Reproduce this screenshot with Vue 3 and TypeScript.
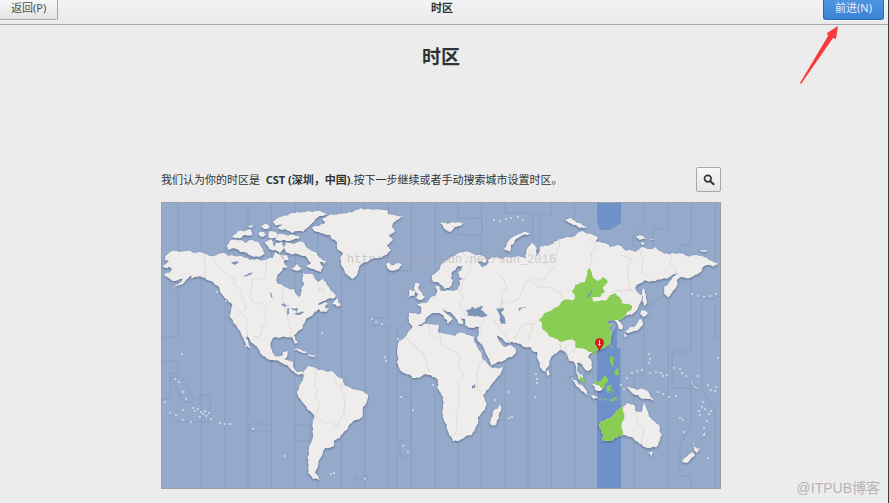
<script setup lang="ts">
type Point = [number, number]

const parse = (s: string): Point[] =>
  s.trim().split(/\s+/).map((p) => p.split(',').map(Number) as Point)

// Deterministic noise, so that coasts shared by two shapes stay identical.
const noise = (x: number, y: number): number => {
  const v = Math.sin(x * 12.9898 + y * 78.233) * 43758.5453
  return (v - Math.floor(v)) * 2 - 1
}

const between = (a: Point, b: Point, depth: number): Point[] => {
  const dx = b[0] - a[0]
  const dy = b[1] - a[1]
  const len = Math.hypot(dx, dy)
  if (depth === 0 || len < 2.5) return [b]
  const mx = (a[0] + b[0]) / 2
  const my = (a[1] + b[1]) / 2
  const n = noise(mx, my) * Math.min(len * 0.16, 1.4)
  const sign = dx > 0 || (dx === 0 && dy > 0) ? 1 : -1
  const m: Point = [mx - (dy / len) * n * sign, my + (dx / len) * n * sign]
  return [...between(a, m, depth - 1), ...between(m, b, depth - 1)]
}

const coast = (s: string): string => {
  const pts = parse(s)
  const out: Point[] = []
  pts.forEach((p, i) => out.push(...between(p, pts[(i + 1) % pts.length], 3)))
  return 'M' + out.map(([x, y]) => `${x.toFixed(1)},${y.toFixed(1)}`).join('L') + 'Z'
}

const border = (s: string): string => {
  const pts = parse(s)
  const out: Point[] = [pts[0]]
  for (let i = 1; i < pts.length; i++) out.push(...between(pts[i - 1], pts[i], 3))
  return 'M' + out.map(([x, y]) => `${x.toFixed(1)},${y.toFixed(1)}`).join('L')
}

const land = [
  // North and Central America
  '165,257 168,254 175,251 180,252 185,251 195,253 205,254 213,256 218,254 223,253 228,256 232,255 243,257 250,260 257,259 265,260 273,258 275,252 278,254 282,257 284,262 288,267 283,268 280,273 277,278 277,283 285,287 294,289 296,294 299,297 301,293 301,288 304,283 302,278 303,273 308,274 312,274 315,279 318,282 320,281 323,279 328,286 330,289 333,292 336,296 333,299 323,301 318,305 326,302 328,304 325,307 327,310 321,312 319,309 314,313 312,316 307,318 305,322 303,325 303,328 300,330 294,335 298,343 295,344 292,337 285,337 279,338 273,338 271,342 272,350 275,356 282,356 283,352 288,351 287,357 285,360 293,362 294,368 297,372 302,371 303,374 298,375 293,371 288,366 282,363 272,360 262,355 257,347 250,340 247,336 246,338 251,348 249,348 245,342 242,336 241,333 238,329 233,323 230,317 231,310 232,304 226,299 222,294 219,287 213,282 205,278 195,277 191,279 193,275 187,279 180,285 172,289 181,282 183,278 173,281 170,279 167,277 164,275 172,269 170,267 165,268 163,265 169,261 165,260',
  // Arctic Canada
  '273,222 280,217 288,215 297,212 308,211 317,211 327,214 317,218 314,222 310,225 303,232 298,231 292,233 285,229 277,228 282,225 275,225',
  '282,234 290,235 299,236 299,239 290,241 283,240 275,240 277,235',
  '228,250 227,245 230,241 240,240 246,243 252,240 258,242 262,248 265,254 259,257 249,255 240,252 236,249',
  '233,236 238,231 247,230 250,229 252,235 244,235 241,238 237,238 232,237',
  '259,226 266,224 270,227 264,229', '258,233 264,232 266,235 261,237', '270,231 277,233 276,238 268,237',
  '265,242 271,239 273,244 275,250 269,249', '276,243 282,242 284,248 280,254 275,250',
  '286,242 293,244 303,242 309,249 317,253 326,261 325,264 320,262 323,267 321,272 313,269 306,266 311,263 305,256 297,254 288,253 284,247',
  '292,268 297,264 302,269 297,271', '247,226 254,225 251,228', '281,255 287,255 289,260 284,261',
  '334,301 337,298 341,305 338,307 332,304', '321,311 329,308 326,312',
  // Greenland and the North Atlantic
  '312,228 319,226 325,223 322,218 333,215 347,213 356,210 367,209 378,209 387,210 388,214 404,216 397,220 392,227 395,232 389,235 393,240 387,245 391,250 388,253 383,256 372,259 363,263 359,268 357,275 353,279 348,276 344,270 341,262 340,258 343,253 338,250 337,242 330,235 320,233 314,231',
  '386,264 389,262 391,265 398,263 402,265 399,269 392,271 388,269',
  '415,283 420,284 418,288 422,293 425,297 419,300 416,298 418,294 414,289', '410,289 415,291 414,296 408,297',
  // Eurasia
  '409,313 420,314 421,307 417,304 425,303 430,298 435,296 437,292 435,287 439,286 441,291 447,290 453,291 458,289 460,285 459,281 468,279 460,278 458,272 463,266 457,267 452,272 451,278 453,281 449,288 445,289 441,285 437,282 433,282 432,275 440,268 445,261 450,258 458,253 464,252 470,252 475,255 480,255 487,260 485,263 478,262 482,267 487,265 488,260 497,257 503,259 515,257 522,257 526,260 527,249 533,243 537,248 535,258 539,253 540,247 550,245 560,239 567,237 576,235 583,231 591,234 598,237 596,242 605,243 610,247 617,245 625,250 635,252 642,247 648,249 655,247 662,252 673,253 685,255 697,255 707,258 712,261 718,263 713,267 708,265 702,268 701,272 694,276 690,278 682,277 677,280 677,286 672,293 668,298 664,293 664,287 672,278 678,273 672,275 667,279 657,280 645,280 639,284 635,288 642,295 641,302 637,310 632,315 625,316 618,320 623,326 622,330 619,329 617,323 614,320 607,322 612,325 609,328 612,335 611,341 605,348 593,352 590,354 588,357 592,363 592,368 587,371 584,368 580,363 577,363 577,370 583,376 584,382 578,378 576,370 574,362 569,361 567,354 560,350 557,353 550,360 548,367 545,372 542,370 538,360 537,352 535,352 530,347 518,344 508,343 504,341 500,337 497,336 500,342 504,347 510,345 516,350 512,357 502,362 491,366 490,362 485,352 479,342 477,338 479,333 479,327 473,328 465,325 465,319 461,318 463,324 458,323 455,317 448,312 443,308 446,313 453,319 451,321 448,324 447,320 439,313 435,313 430,315 427,317 425,322 419,325 413,327 409,323',
  // Arctic islands of Eurasia
  '440,223 448,224 453,222 465,222 461,226 455,227 451,232 446,230',
  '530,233 523,235 516,239 511,245 510,252 504,249 507,243 514,236 522,233', '565,220 571,218 577,223 587,227 580,228 573,225',
  '636,236 643,236 648,239 640,240', '650,238 657,239 652,240', '700,250 707,250 704,252', '641,242 645,243 642,245',
  // Japan, Sakhalin
  '643,288 646,295 647,303 644,306 643,297', '642,310 648,313 643,317 640,314', '642,318 643,323 640,328 634,331 627,333 625,331 634,327 638,322', '624,333 627,335 625,338',
  // Africa and Madagascar
  '415,325 420,326 429,324 438,324 438,332 448,334 455,336 458,333 467,335 475,336 474,340 478,348 482,356 487,363 492,368 503,367 500,375 490,387 483,395 486,402 485,410 478,417 478,424 472,435 463,439 453,441 451,437 447,425 442,412 443,405 443,397 437,388 438,382 436,378 430,375 422,376 412,378 403,373 397,363 397,352 398,343 405,337 410,330',
  '500,404 501,411 496,425 491,425 491,418 493,411',
  // South America
  '303,374 307,367 313,367 318,370 323,370 332,371 337,376 343,379 345,386 352,389 362,391 368,395 367,401 363,407 361,418 352,423 347,430 340,438 334,441 334,446 325,448 323,453 321,457 319,460 318,466 315,472 320,480 313,479 308,473 308,463 309,453 311,443 313,428 314,415 307,409 302,402 297,392 299,386 303,380',
  // Australia, New Guinea, New Zealand
  '623,407 627,403 634,405 635,410 641,412 644,403 648,412 652,420 660,427 662,435 657,447 650,448 642,445 638,442 632,437 623,435 615,438 610,441 603,441 603,435 599,425 600,422 610,418 617,410',
  '648,452 653,452 651,457', '627,387 632,388 637,390 643,389 650,395 656,401 650,399 643,399 637,395 631,392',
  '693,442 695,447 700,449 697,453 694,451', '692,452 695,455 690,460 686,463 682,462 686,457',
  // Indonesia, Ceylon, Cuba
  '571,377 577,381 583,386 587,391 587,395 581,391 575,384', '588,395 595,396 602,398 594,399',
  '592,384 600,382 603,388 600,391 595,390', '547,370 550,374 548,377', '293,350 300,349 307,353 301,352', '309,354 316,355 314,357 308,356',
]

const selected = [
  '538,320 542,317 547,312 554,308 563,301 573,300 575,297 572,292 575,285 585,282 587,271 590,268 592,272 593,278 598,281 603,277 608,282 603,287 605,292 600,297 592,298 593,302 600,301 607,300 610,295 615,293 620,297 622,303 632,306 631,310 627,312 625,316 618,320 614,320 607,322 612,325 609,328 612,335 611,341 605,348 593,352 588,351 584,349 576,348 575,345 575,341 572,339 568,340 560,342 556,339 550,337 543,330 542,323',
  '623,407 623,435 615,438 610,441 603,441 603,435 599,425 600,422 610,418 617,410',
  '593,384 600,381 603,377 606,375 608,380 605,384 604,389 601,388 599,385', '578,374 583,378 585,384 580,381',
  '611,356 614,358 613,363 616,368 612,366 610,361', '614,371 618,367 620,374 616,376', '607,386 615,385 610,387 614,392 610,390 608,394',
  '592,353 596,352 594,356', '611,345 613,347 611,351', '601,398 607,398 605,400', '610,400 618,397 612,402',
]

const lakes = [
  '466,310 472,307 475,309 479,307 483,306 481,310 488,315 480,317 468,316',
  '496,309 503,307 504,310 501,312 504,316 506,324 501,324 500,317',
  '280,305 284,303 290,306 285,307', '287,309 290,308 289,314 287,315', '291,308 298,308 297,312 293,310', '293,315 299,313 304,312 298,315',
  '270,292 272,294 273,299 271,297', '231,263 239,262 235,265', '242,276 248,274 253,272 250,275',
  '586,297 590,293 593,288 592,292 588,297', '472,386 475,384 475,388 472,389', '519,308 525,307 527,308 522,308 519,311',
]

const zones = [
  '213,256 218,266 228,275 236,279 234,285 241,290 242,297 246,310 240,313 246,318 247,338',
  '265,257 265,278 252,279 252,302 263,303 267,308 266,325 262,327 261,335 253,337', '205,254 205,278',
  '283,287 283,300 287,317 289,326 292,331 290,338', '320,292 319,288 325,289 323,294',
  '315,368 317,375 315,382 318,390 315,396 320,404 316,413 320,420 331,422 336,427 344,415 344,394 340,390 342,382', '334,376 336,383 343,387',
  '463,253 470,262 469,273 463,282 460,292 463,297 460,308 466,316', '498,275 504,280 507,288 501,294 503,302 499,307',
  '560,240 557,250 556,262 550,272 540,281 527,281 522,292 517,300 500,304', '532,282 538,288 550,287 560,292 565,300 572,300',
  '590,238 597,245 595,251 591,253 590,268', '620,255 628,258 633,261 627,268 628,280 632,292',
  '642,247 641,255 643,263 641,272 650,276', '672,254 670,263 676,268 675,274',
  '607,300 614,291 625,291 634,290', '493,317 499,329 504,333 510,344', '514,338 520,328 526,324 537,322', '526,342 530,334 535,323', '484,318 480,325 482,335',
  '405,336 415,345 423,353 427,362 430,372', '439,333 440,342 450,350 458,353 459,368 463,376 458,384 459,398 456,413 457,428 451,437', '482,350 480,365 476,375 477,388 482,395', '429,325 431,335 438,338',
  '623,407 623,435', '636,411 637,424 642,426 642,444', '560,342 561,350 566,348 567,356', '575,346 575,350 570,353',
]

const meridians = [
  'M178,203V337H162', 'M201.5,203V488', 'M225,203V488', 'M248,203V488', 'M271.5,203V488', 'M295,203V488', 'M318,203V488', 'M341.5,203V488',
  'M365,203V488', 'M388,203V318H373V326H388V488', 'M411.5,203V271H388', 'M411.5,315L397,330V488', 'M435,203V280', 'M458,203V235H482V218H458', 'M481.5,203V260', 'M411.5,380V488',
  'M435,390V488', 'M458,440V488', 'M481.5,420V488', 'M505,203V213H533V250', 'M505,365V488', 'M551,203V215H540V245', 'M528,350V488', 'M551.5,365V488', 'M574.5,370V488',
  'M574.5,203V218', 'M644,203V223L633,236V247', 'M668,203V229H653V250', 'M691,203V245H680V253', 'M715,203V260', 'M644,340V310L680,283', 'M644,346V376H634V450V488', 'M668,300V488', 'M691,270V352H672V388H691', 'M691,388V425L680,445V476H691V488', 'M715,300V337H720', 'M702,300V390L715,410V488',
  'M162,361H178V373H170V398L161,400', 'M172,377H182L193,399V402H182Z', 'M166,410L178,422H210V395H200V405', 'M271.5,424H250V431H271.5', 'M295,425H310V441H295Z', 'M405,397H411V441H400V456H411', 'M355,476H367V480H355Z', 'M574,351V377H565', 'M597,360V374H585V388L597,400H620V348', 'M690,292Q706,304 720,296',
]

const islets: Point[] = [
  [175, 379], [179, 382], [183, 392], [186, 399], [165, 402], [170, 413], [176, 415], [183, 410], [183, 420], [191, 422], [193, 408], [195, 411], [198, 409], [201, 412], [203, 414], [206, 416], [209, 413], [211, 419], [205, 411], [200, 417], [220, 423], [225, 424], [230, 424], [253, 429], [182, 354], [285, 456], [322, 333],
  [372, 319], [376, 322], [382, 324], [385, 357], [386, 361], [398, 339], [400, 341], [405, 340], [401, 397], [413, 410], [403, 446], [408, 452], [331, 474], [334, 473], [365, 479],
  [495, 400], [509, 392], [509, 418], [512, 417], [536, 374], [537, 379], [537, 383], [535, 397], [433, 385],
  [494, 220], [500, 221], [506, 219], [511, 218], [518, 217], [523, 220], [246, 346], [226, 301], [217, 292],
  [692, 294], [698, 296], [704, 297], [710, 296], [716, 294], [649, 354], [650, 359], [649, 363],
  [627, 378], [632, 373], [637, 371], [642, 370], [650, 373], [656, 372], [661, 373], [663, 376], [667, 375], [674, 368], [680, 369], [682, 373], [686, 376], [698, 376], [708, 385], [711, 390], [715, 391], [716, 387], [703, 402], [699, 411], [705, 409], [709, 414], [700, 415], [707, 421], [711, 411], [704, 428], [702, 407],
  [658, 392], [663, 394], [669, 397], [676, 396], [621, 385], [624, 389], [680, 418], [683, 420], [684, 432], [704, 435], [708, 458], [718, 358],
]
</script>

<template>
  <div class="page">
    <header class="bar">
      <button class="btn back" type="button">返回(P)</button>
      <span class="title">时区</span>
      <button class="btn next" type="button">前进(N)</button>
    </header>

    <main class="content">
      <h1>时区</h1>
      <div class="row">
        <p>我们认为你的时区是&nbsp; <b>CST (深圳，中国)</b>.按下一步继续或者手动搜索城市设置时区。</p>
        <button class="search" type="button" aria-label="搜索">
          <svg viewBox="0 0 12 12" width="12" height="12">
            <circle cx="4.8" cy="4.6" r="3.3" fill="none" stroke="#2e3436" stroke-width="1.7" />
            <path d="M7.3 7.2L10.6 10.3" stroke="#2e3436" stroke-width="2" stroke-linecap="round" />
          </svg>
        </button>
      </div>

      <svg class="map" viewBox="161 202 560 287" role="img" aria-label="世界时区地图">
        <rect class="sea" x="161" y="202" width="560" height="287" />
        <g class="band">
          <path d="M597,202H621V223L610,230H600L597,222Z" />
          <path d="M597,350L611,346V335L617,325V348H621V489H597Z" />
        </g>
        <g class="meridians"><path v-for="(d, i) in meridians" :key="i" :d="d" /></g>
        <g class="lands">
          <path v-for="(s, i) in land" :key="i" :d="coast(s)" />
          <path d="M691,380L694,386L699,389L695,388L692,384Z M647,352L650,356L649,362L650,356Z M702,437L706,431L705,435Z" />
        </g>
        <g class="islets"><circle v-for="([x, y], i) in islets" :key="i" :cx="x" :cy="y" r="0.9" /></g>
        <g class="zones"><path v-for="(s, i) in zones" :key="i" :d="border(s)" /></g>
        <g class="selected"><path v-for="(s, i) in selected" :key="i" :d="coast(s)" /></g>
        <g class="lakes"><path v-for="(s, i) in lakes" :key="i" :d="coast(s)" /></g>
        <g class="pin">
          <path d="M599.5,351C598.5,347 595.5,346 595.5,342.5A4,4 0 0 1 603.5,342.5C603.5,346 600.5,347 599.5,351Z" />
          <path class="pin-dot" d="M599.5,340V342M598.3,344.5H600.7M599.5,342V346" />
        </g>
        <text class="url" x="347" y="263">http://blog.csdn.net/sun_2016</text>
        <path class="frame" d="M161,202.5H720.5V488.5H161.5V202" />
      </svg>
    </main>

    <svg class="arrow" viewBox="0 0 42 62" width="42" height="62" aria-hidden="true">
      <path d="M1 59L29 12L28 9L39 2L37 15L34 14L2 60Z" />
    </svg>
    <span class="credit">@ITPUB博客</span>
  </div>
</template>

<style>
body {
  margin: 0;
  background: #ececec;
}
</style>

<style scoped>
.page {
  position: relative;
  box-sizing: border-box;
  min-height: 100vh;
  overflow: hidden;
  border-right: 1px solid #3a3a3a;
  background: #ececec;
  color: #2e3436;
  font-family: "Noto Sans", "Noto Sans CJK SC", sans-serif;
  font-size: 11px;
  line-height: 16px;
}
.bar {
  display: grid;
  grid-template-columns: 1fr auto 1fr;
  align-items: start;
  height: 24px;
  padding-right: 4px;
  border-bottom: 1px solid #a9a9a9;
  background: linear-gradient(#f3f3f3, #eaeaea);
}
.title {
  font-weight: 700;
}
.btn {
  height: 20px;
  padding: 0 11px 3px;
  border: 1px solid #a5a5a5;
  border-top: 0;
  font: inherit;
}
.back {
  justify-self: start;
  border-left: 0;
  border-radius: 0 0 2px 0;
  background: linear-gradient(#f6f6f6, #e4e4e4);
  box-shadow: 0 1px #f8f8f8;
  color: #4a4f51;
}
.next {
  justify-self: end;
  border-color: #2a68b4;
  border-radius: 0 0 3px 3px;
  background: linear-gradient(#4d94e2, #3b82d6);
  box-shadow: 0 1px #f8f8f8;
  color: #e6effa;
}
.content {
  display: flex;
  flex-direction: column;
  width: 100%;
  max-width: 560px;
  margin: 0 auto;
  padding: 20px 6px 14px 0;
}
h1 {
  margin: 0 0 98px;
  font-size: 19px;
  line-height: 24px;
  text-align: center;
}
.row {
  display: flex;
  align-items: center;
  justify-content: space-between;
  margin-bottom: 10px;
}
.row p {
  margin: 0;
}
.search {
  display: grid;
  place-items: center;
  width: 25px;
  height: 25px;
  padding: 0;
  border: 1px solid #a8a8a8;
  border-radius: 2px;
  background: linear-gradient(#f7f7f7, #e6e6e6);
}
.map {
  display: block;
  width: 100%;
  height: auto;
}
.sea {
  fill: #95aacb;
}
.band {
  fill: #6e91c8;
}
.meridians {
  fill: none;
  stroke: #869dc2;
  stroke-width: 1;
}
.lands {
  fill: #efecec;
  filter: drop-shadow(0 1px 1px rgba(50, 65, 95, 0.6));
}
.islets {
  fill: #dde3ee;
}
.zones {
  fill: none;
  stroke: #d6d2d2;
  stroke-width: 0.7;
}
.selected {
  fill: #8acd55;
}
.lakes {
  fill: #7e93b5;
}
.pin {
  fill: #e01b1b;
  stroke: #8c1a12;
  stroke-width: 0.6;
}
.pin-dot {
  fill: none;
  stroke: #f6d9c8;
  stroke-width: 1;
}
.url {
  fill: #a8a8ac;
  fill-opacity: 0.5;
  font-family: "Liberation Mono", monospace;
  font-size: 12px;
}
.frame {
  fill: none;
  stroke: #9c9fa5;
}
.arrow {
  position: absolute;
  top: 24px;
  left: calc(100% - 89px);
  fill: #f93a3a;
}
.credit {
  position: absolute;
  right: 8px;
  bottom: 5px;
  color: #b4b4b4;
  font-family: "Liberation Sans", "Noto Sans CJK SC", sans-serif;
  font-size: 14px;
  line-height: 20px;
}
</style>
